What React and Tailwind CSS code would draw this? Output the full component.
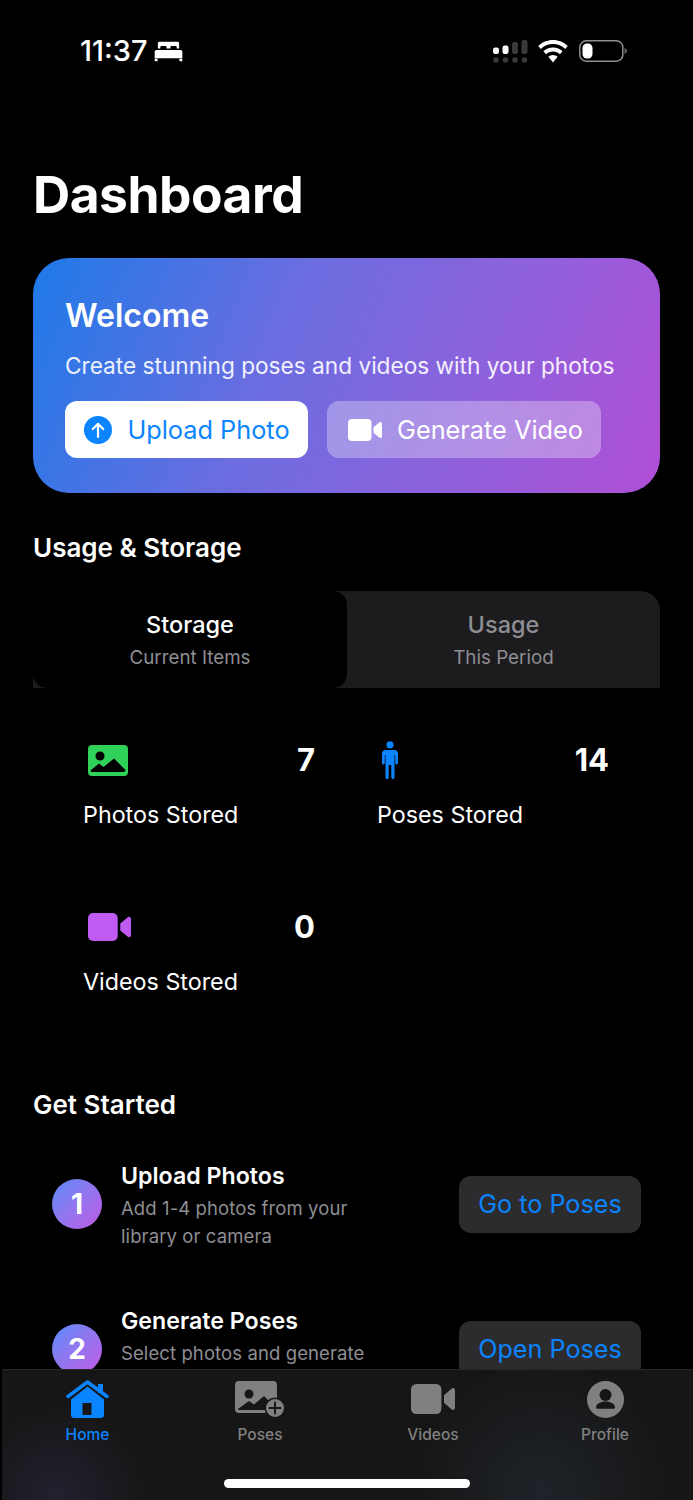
import React from 'react';

const BedIcon = () => (
  <svg width="29" height="21" viewBox="0 0 30 20" fill="white">
    <path d="M4 1.500C4 .7 4.700 0 5.500 0h19C25.300 0 26 .7 26 1.500V7h-2.500V5.500c0-.8-.6-1.300-1.300-1.300h-3.900c-.8 0-1.300.5-1.300 1.300V7h-4V5.500c0-.8-.5-1.300-1.300-1.300H7.800c-.7 0-1.300.5-1.300 1.300V7H4z" />
    <path d="M2.500 8.500h25c1 0 1.800.8 1.800 1.800V17H.7v-6.700c0-1 .8-1.800 1.800-1.800zM.7 17.500h3v2.500h-3zM26.300 17.500h3v2.500h-3z" />
  </svg>
);

const SignalIcon = () => (
  <svg width="35" height="23" viewBox="0 0 35 23">
    <rect x="0" y="7.500" width="6" height="6.500" rx="2.200" fill="white" />
    <rect x="9.500" y="5.500" width="6" height="8.500" rx="2.200" fill="white" />
    <rect x="19" y="2" width="6" height="12" rx="2.200" fill="#3a3a3c" />
    <rect x="28.500" y="0" width="6" height="14" rx="2.200" fill="#3a3a3c" />
    <circle cx="3" cy="20" r="2.800" fill="#3a3a3c" />
    <circle cx="12.500" cy="20" r="2.800" fill="#3a3a3c" />
    <circle cx="22" cy="20" r="2.800" fill="#3a3a3c" />
    <circle cx="31.500" cy="20" r="2.800" fill="#3a3a3c" />
  </svg>
);

const WifiIcon = () => (
  <svg width="30" height="23" viewBox="0 0 30 23" fill="white">
    <path d="M15 0c5.800 0 11 2.300 14.800 6l-2.700 2.900C24 5.900 19.700 4 15 4S6 5.900 2.900 8.900L.2 6C4 2.300 9.200 0 15 0z" />
    <path d="M15 7.500c3.700 0 7.100 1.500 9.600 3.800l-2.700 2.900c-1.800-1.700-4.200-2.700-6.900-2.700s-5.100 1-6.900 2.700l-2.700-2.900C7.900 9 11.300 7.500 15 7.500z" />
    <path d="M15 15c1.800 0 3.400.7 4.600 1.800L15 22.500l-4.600-5.700C11.600 15.700 13.200 15 15 15z" />
  </svg>
);

const BatteryIcon = () => (
  <svg width="48" height="22" viewBox="0 0 48 22">
    <rect x="0.800" y="0.800" width="43" height="20.400" rx="6.500" fill="none" stroke="#8e8e93" strokeWidth="1.500" />
    <rect x="3.500" y="3.500" width="10" height="15" rx="4.500" fill="white" />
    <path d="M45.500 8c1.500.4 2.500 1.600 2.500 3s-1 2.600-2.500 3z" fill="#636366" />
  </svg>
);

const UploadIcon = () => (
  <svg width="28" height="28" viewBox="0 0 28 28">
    <circle cx="14" cy="14" r="14" fill="#0a84ff" />
    <path d="M14 21V8M8.800 13 14 7.800 19.200 13" fill="none" stroke="white" strokeWidth="2.200" strokeLinecap="round" strokeLinejoin="round" />
  </svg>
);

const VideoIcon = ({ color, width = 34, height = 22 }) => (
  <svg width={width} height={height} viewBox="0 0 34 22" fill={color} preserveAspectRatio="none">
    <rect x="0" y="0" width="23.500" height="22" rx="4" />
    <path d="M25.500 8.200 31.500 3.300c1-.8 2.500-.1 2.500 1.200v13c0 1.300-1.500 2-2.500 1.200l-6-4.900z" />
  </svg>
);

const PhotoIcon = () => (
  <svg width="40" height="31" viewBox="0 0 40 31">
    <rect width="40" height="31" rx="4" fill="#30d158" />
    <circle cx="12" cy="11" r="4.500" fill="black" />
    <path d="M2.500 25.500 11 18.500l4.500 3.500L26 13.500 37.500 25c0 1.200-.8 2-2 2h-31c-1.200 0-2-.4-2-1.500z" fill="black" />
    <path d="M3 29h34" stroke="#30d158" strokeWidth="2" />
  </svg>
);

const PersonIcon = () => (
  <svg width="16" height="38" viewBox="0 0 16 38" fill="#0a84ff">
    <circle cx="8" cy="3.800" r="3.600" />
    <path d="M3.500 9h9C14.500 9 16 10.500 16 12.500V22c0 .9-.6 1.500-1.400 1.500S13.200 22.900 13.200 22v-8h-.7v22.500c0 .9-.7 1.500-1.500 1.500s-1.700-.6-1.700-1.500V24H6.700v12.500c0 .9-.8 1.500-1.700 1.500s-1.500-.6-1.500-1.500V14h-.7v8c0 .9-.6 1.500-1.400 1.500S0 22.900 0 22v-9.500C0 10.500 1.500 9 3.500 9z" />
  </svg>
);

const HomeIcon = () => (
  <svg width="43" height="38" viewBox="0 0 43 38" fill="#0a84ff">
    <path d="M21.500 6.500 38 19.500V35c0 1.700-1.300 3-3 3H8c-1.700 0-3-1.300-3-3V19.500zM16.500 23v12h9V23z" fillRule="evenodd" />
    <path d="M2 16.500 21.500 2 41 16.500" fill="none" stroke="#0a84ff" strokeWidth="3.500" strokeLinecap="round" strokeLinejoin="round" />
    <rect x="32" y="4" width="5" height="9" />
  </svg>
);

const AddPhotoIcon = () => (
  <svg width="50" height="37" viewBox="0 0 50 37">
    <rect x="0" y="0" width="42" height="32" rx="4" fill="#808080" />
    <circle cx="14" cy="13" r="4.500" fill="#161616" />
    <path d="M3 28 14 20l5 3.500L29 15l10 10v3c0 .6-.4 1-1 1H4c-.6 0-1-.4-1-1z" fill="#161616" />
    <circle cx="40" cy="27" r="10.500" fill="#161616" />
    <circle cx="40" cy="27" r="9" fill="#808080" />
    <path d="M40 21.500v11M34.500 27h11" stroke="#161616" strokeWidth="2" strokeLinecap="round" />
  </svg>
);

const ProfileIcon = () => (
  <svg width="37" height="37" viewBox="0 0 37 37">
    <circle cx="18.500" cy="18.500" r="18.500" fill="#808080" />
    <circle cx="18.500" cy="14" r="6" fill="#161616" />
    <path d="M9 26.500c0-3.600 4.300-6 9.500-6s9.500 2.400 9.500 6c0 .7-.5 1.200-1.200 1.200H10.200c-.7 0-1.200-.5-1.200-1.200z" fill="#161616" />
  </svg>
);

const Stat = ({ icon, value, label }) => (
  <div className="w-[231px]">
    <div className="flex h-[38px] items-center justify-between">
      <div className="flex w-[48px] justify-start pl-[4px]">{icon}</div>
      <span className="text-[31px] font-bold text-white">{value}</span>
    </div>
    <div className="mt-[21px] -ml-[1px] text-[23.3px] leading-[30px] text-white">{label}</div>
  </div>
);

const Step = ({ num, title, lines, action }) => (
  <div className="flex h-[145px] items-start">
    <div className="mt-[18px] flex h-[50px] w-[50px] shrink-0 items-center justify-center rounded-full bg-gradient-to-br from-[#4f8af8] to-[#bf57e6] text-[28px] font-bold text-white">
      {num}
    </div>
    <div className="ml-[19px] w-[338px]">
      <div className="text-[23.2px] leading-[30px] font-semibold text-white">{title}</div>
      <div className="mt-[3px] text-[18.5px] leading-[28px] tracking-[0.1px] text-[#8e8e93]">
        {lines.map((line) => (
          <div key={line}>{line}</div>
        ))}
      </div>
    </div>
    <button className="mt-[15px] h-[57px] w-[182px] shrink-0 rounded-[12px] bg-[#2c2c2e] text-[25.2px] text-[#0a84ff]">
      {action}
    </button>
  </div>
);

const TabItem = ({ icon, label, active, width }) => (
  <div className={`flex flex-col items-center ${width}`}>
    <div className="flex h-[50px] items-center justify-center">{icon}</div>
    <span className={`mt-[1px] text-[15.5px] leading-[20px] font-medium ${active ? 'text-[#0a84ff]' : 'text-[#808080]'}`}>
      {label}
    </span>
  </div>
);

export default function App() {
  return (
    <div className="relative flex h-[1500px] w-[693px] flex-col overflow-hidden bg-black font-['Inter','Liberation_Sans',sans-serif]">
      <div className="h-[1369px] overflow-hidden">
        {/* status bar */}
        <div className="flex h-[103px] items-start justify-between pt-[36px] pr-[66px] pl-[80px]">
          <div className="flex h-[30px] items-center gap-[6px]">
            <span className="text-[29px] leading-[30px] font-medium text-white">11:37</span>
            <BedIcon />
          </div>
          <div className="flex h-[30px] items-center gap-[10px]">
            <SignalIcon />
            <WifiIcon />
            <div className="ml-[1px]">
              <BatteryIcon />
            </div>
          </div>
        </div>

        <div className="px-[33px]">
          <h1 className="mt-[59px] h-[96px] text-[51.5px] leading-[64px] font-bold tracking-[-0.5px] text-white">Dashboard</h1>

          {/* welcome card */}
          <div className="h-[235px] rounded-[36px] bg-[linear-gradient(112deg,#1e7ae8_0%,#6a6de0_38%,#8d62dc_68%,#b04fd5_100%)] px-[32px] pt-[38px]">
            <div className="text-[32px] leading-[40px] font-semibold text-white">Welcome</div>
            <div className="mt-[15px] text-[22.65px] leading-[30px] whitespace-nowrap text-white/90">
              Create stunning poses and videos with your photos
            </div>
            <div className="mt-[20px] flex gap-[19px]">
              <button className="flex h-[57px] w-[243px] items-center justify-center gap-[15px] rounded-[12px] bg-white pl-[1px] text-[25.3px] text-[#0a84ff]">
                <UploadIcon />
                Upload Photo
              </button>
              <button className="flex h-[57px] w-[274px] items-center justify-center gap-[15px] rounded-[12px] bg-white/30 pl-[3px] text-[25.3px] text-white">
                <VideoIcon color="white" />
                Generate Video
              </button>
            </div>
          </div>

          <h2 className="mt-[38px] text-[26px] leading-[34px] font-semibold text-white">Usage &amp; Storage</h2>

          {/* segmented tabs */}
          <div className="mt-[26px] flex h-[97px] rounded-t-[20px] bg-[#1c1c1e]">
            <div className="flex w-[314px] flex-col items-center rounded-[14px] bg-black pt-[19px]">
              <span className="text-[23.5px] leading-[30px] font-medium text-white">Storage</span>
              <span className="mt-[5px] text-[18.8px] leading-[26px] text-[#8e8e93]">Current Items</span>
            </div>
            <div className="flex flex-1 flex-col items-center pt-[19px]">
              <span className="text-[23.5px] leading-[30px] font-medium text-[#8e8e93]">Usage</span>
              <span className="mt-[5px] text-[18.8px] leading-[26px] text-[#8e8e93]">This Period</span>
            </div>
          </div>

          {/* stats */}
          <div className="mt-[53px] ml-[51px] grid grid-cols-[294px_231px] gap-y-[78px]">
            <Stat icon={<PhotoIcon />} value="7" label="Photos Stored" />
            <Stat icon={<PersonIcon />} value="14" label="Poses Stored" />
            <Stat icon={<VideoIcon color="#bf5af2" width={43} height={28} />} value="0" label="Videos Stored" />
          </div>

          <h2 className="mt-[91px] text-[26px] leading-[34px] font-semibold text-white">Get Started</h2>

          {/* steps */}
          <div className="mt-[39px] pl-[19px]">
            <Step num="1" title="Upload Photos" lines={['Add 1-4 photos from your', 'library or camera']} action="Go to Poses" />
            <Step num="2" title="Generate Poses" lines={['Select photos and generate']} action="Open Poses" />
          </div>
        </div>
      </div>

      {/* tab bar */}
      <div className="ml-[2px] flex h-[131px] items-start border-t border-[#262626] bg-[#161616] bg-[radial-gradient(circle_at_55px_125px,#24202f_0,transparent_90px),radial-gradient(circle_at_540px_120px,#1f2329_0,transparent_130px)] pt-[4px]">
        <TabItem icon={<HomeIcon />} label="Home" active width="w-[171px]" />
        <TabItem icon={<AddPhotoIcon />} label="Poses" width="w-[174px]" />
        <TabItem icon={<VideoIcon color="#808080" width={44} height={30} />} label="Videos" width="w-[172px]" />
        <TabItem icon={<ProfileIcon />} label="Profile" width="w-[172px]" />
      </div>

      {/* home indicator sits over the tab bar */}
      <div className="absolute top-[1479px] left-[224px] h-[9px] w-[246px] rounded-full bg-white" />
    </div>
  );
}
